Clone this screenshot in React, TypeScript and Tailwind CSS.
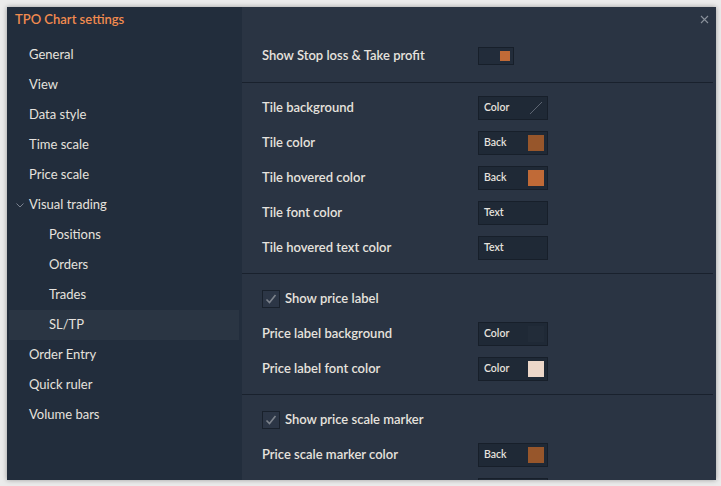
const FONT = { fontFamily: 'Lato, "Open Sans", sans-serif' }

type NavItem = { label: string; level: 0 | 1; expanded?: boolean; active?: boolean }

const NAV: NavItem[] = [
  { label: 'General', level: 0 },
  { label: 'View', level: 0 },
  { label: 'Data style', level: 0 },
  { label: 'Time scale', level: 0 },
  { label: 'Price scale', level: 0 },
  { label: 'Visual trading', level: 0, expanded: true },
  { label: 'Positions', level: 1 },
  { label: 'Orders', level: 1 },
  { label: 'Trades', level: 1 },
  { label: 'SL/TP', level: 1, active: true },
  { label: 'Order Entry', level: 0 },
  { label: 'Quick ruler', level: 0 },
  { label: 'Volume bars', level: 0 },
]

type Swatch = 'none' | 'empty' | string

function ColorBox({ text, swatch }: { text?: string; swatch: Swatch }) {
  return (
    <div className="w-[70px] h-[24px] shrink-0 border border-[#171f2a] bg-[#1f2936] flex items-center justify-between pl-[5px] pr-[3px]">
      <span className="text-[10.5px] text-[#e6e2de] font-semibold">{text}</span>
      {swatch === 'none' ? (
        <svg width="16" height="16" viewBox="0 0 16 16">
          <line x1="2" y1="14" x2="14" y2="2" stroke="#5d6572" strokeWidth="1" />
        </svg>
      ) : swatch === 'empty' ? null : (
        <div className="w-[16px] h-[16px]" style={{ background: swatch }} />
      )}
    </div>
  )
}

function Row({ label, children }: { label?: string; children: React.ReactNode }) {
  return (
    <div className="flex items-center h-[24px] shrink-0">
      <div className="w-[216px] text-[13px] font-semibold text-[#e6e2de]">{label}</div>
      {children}
    </div>
  )
}

function Check({ label }: { label: string }) {
  return (
    <div className="flex items-center h-[24px] gap-[5px] shrink-0">
      <div className="w-[18px] h-[18px] border border-[#19212c] bg-[#2c3646] flex items-center justify-center">
        <svg width="12" height="12" viewBox="0 0 12 12">
          <path d="M1.5 6.5 L4.5 9.5 L10.5 2" fill="none" stroke="#7d838c" strokeWidth="1.6" />
        </svg>
      </div>
      <span className="text-[13px] font-semibold text-[#e6e2de]">{label}</span>
    </div>
  )
}

export default function App() {
  return (
    <div className="w-[721px] h-[486px] bg-[#ebebeb] p-[7px]" style={FONT}>
      <div className="relative w-[709px] h-[473px] flex overflow-hidden shadow-[0_0_5px_rgba(0,0,0,0.35)]">
        {/* sidebar */}
        <aside className="w-[235px] shrink-0 bg-[#222d3c] flex flex-col">
          <div className="h-[33px] shrink-0 pt-[4px] pl-[8px] text-[13px] font-semibold text-[#f28b4f] leading-[16px]">
            TPO Chart settings
          </div>
          {NAV.map((n) => (
            <div
              key={n.label}
              className={
                'h-[30px] shrink-0 flex items-center ml-[2px] mr-[3px] text-[13px] text-[#e6e2de] ' +
                (n.active ? 'bg-[#2a3543] ' : '') +
                (n.level === 1 ? 'pl-[40px]' : 'pl-[20px]')
              }
            >
              {n.expanded && (
                <svg className="-ml-[13px] mr-[5px]" width="8" height="8" viewBox="0 0 8 8">
                  <path d="M0.5 2.5 L4 6 L7.5 2.5" fill="none" stroke="#7b8290" strokeWidth="1" />
                </svg>
              )}
              {n.label}
            </div>
          ))}
        </aside>

        {/* content */}
        <main className="flex-1 bg-[#2a3443] flex flex-col overflow-hidden">
          <button className="absolute right-[7px] top-[8px] text-[#8a919b]">
            <svg width="9" height="9" viewBox="0 0 9 9">
              <path d="M1 1 L8 8 M8 1 L1 8" stroke="currentColor" strokeWidth="1.1" />
            </svg>
          </button>

          <section className="h-[76px] shrink-0 pt-[37px] pl-[20px] mr-[3px] border-b border-[#19212d]">
            <Row label="Show Stop loss & Take profit">
              <div className="w-[36px] h-[18px] border border-[#171f2a] bg-[#222c3a] flex items-center justify-end pr-[3px]">
                <div className="w-[10px] h-[10px] bg-[#c06a37]" />
              </div>
            </Row>
          </section>

          <section className="shrink-0 flex flex-col gap-[11px] pt-[13px] pb-[13px] pl-[20px] mr-[3px] border-b border-[#19212d]">
            <Row label="Tile background">
              <ColorBox text="Color" swatch="none" />
            </Row>
            <Row label="Tile color">
              <ColorBox text="Back" swatch="#97562b" />
            </Row>
            <Row label="Tile hovered color">
              <ColorBox text="Back" swatch="#c06a37" />
            </Row>
            <Row label="Tile font color">
              <ColorBox text="Text" swatch="empty" />
            </Row>
            <Row label="Tile hovered text color">
              <ColorBox text="Text" swatch="empty" />
            </Row>
          </section>

          <section className="shrink-0 flex flex-col gap-[11px] pt-[13px] pb-[13px] pl-[20px] mr-[3px] border-b border-[#19212d]">
            <Check label="Show price label" />
            <Row label="Price label background">
              <ColorBox text="Color" swatch="#222c39" />
            </Row>
            <Row label="Price label font color">
              <ColorBox text="Color" swatch="#ecd7c9" />
            </Row>
          </section>

          <section className="shrink-0 flex flex-col gap-[11px] pt-[13px] pl-[20px] mr-[3px]">
            <Check label="Show price scale marker" />
            <Row label="Price scale marker color">
              <ColorBox text="Back" swatch="#97562b" />
            </Row>
            <Row>
              <ColorBox swatch="empty" />
            </Row>
          </section>
        </main>
      </div>
    </div>
  )
}
